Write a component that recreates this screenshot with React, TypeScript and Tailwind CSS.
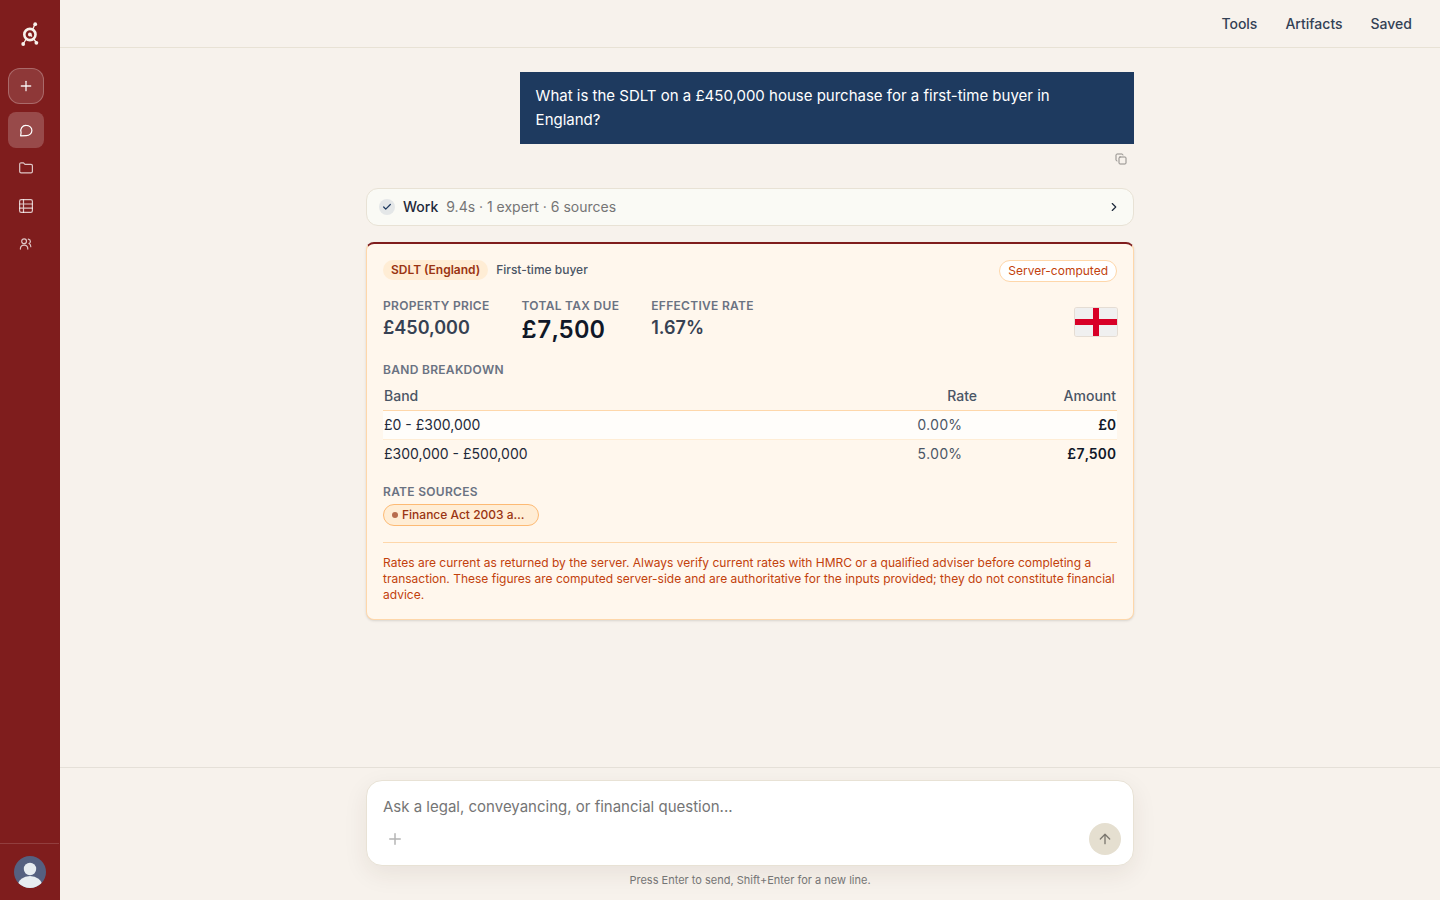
import { useState } from "react";
import { ArrowUp, Check, ChevronRight, Copy, Plus } from "lucide-react";
import clsx from "clsx";

const navItems = [
  { label: "Chat", active: true },
  { label: "Projects", active: false },
  { label: "Tables", active: false },
  { label: "Team", active: false },
];

const bands = [
  { band: "£0 - £300,000", rate: "0.00%", amount: "£0" },
  { band: "£300,000 - £500,000", rate: "5.00%", amount: "£7,500" },
];

function NavIcon({ label }: { label: string }) {
  const common = {
    width: 14,
    height: 14,
    viewBox: "0 0 14 14",
    fill: "none",
    stroke: "currentColor",
    strokeWidth: 1.2,
    strokeLinecap: "round" as const,
    strokeLinejoin: "round" as const,
  };
  if (label === "Chat") {
    return (
      <svg {...common}>
        <path d="M1.6 12.8l.5-3.1A5.3 5.3 0 0 1 7.3 2.4a5.6 5.1 0 0 1 0 10.2z" />
      </svg>
    );
  }
  if (label === "Projects") {
    return (
      <svg {...common}>
        <path d="M.7 3.2c0-.9.5-1.4 1.4-1.4h2.4l1.5 1.5h6c.9 0 1.4.5 1.4 1.4v5.8c0 .9-.5 1.4-1.4 1.4H2.1c-.9 0-1.4-.5-1.4-1.4z" />
      </svg>
    );
  }
  if (label === "Tables") {
    return (
      <svg {...common}>
        <rect x=".6" y=".6" width="12.8" height="12.8" rx="1.6" />
        <path d="M4.5.6v12.8M.6 5h12.8M.6 9.2h12.8" />
      </svg>
    );
  }
  return (
    <svg {...common}>
      <circle cx="5.1" cy="4.2" r="2.4" />
      <path d="M1.4 12.1c0-2.5 1.4-3.9 3.7-3.9s3.7 1.4 3.7 3.9M9.3 2.2c1.3.2 2.1 1 2.1 2.2 0 .9-.5 1.7-1.4 2.1 1.2.6 1.8 1.6 1.8 3.2" />
    </svg>
  );
}

function Logo() {
  return (
    <svg className="h-6 w-6" viewBox="0 0 24 24" fill="none" stroke="#f7f2ec">
      <circle cx="11.9" cy="12.5" r="5.6" strokeWidth="2.6" />
      <circle cx="11.9" cy="12.5" r="1.9" fill="#f7f2ec" stroke="none" />
      <path d="M12 12.5l2 2M14.6 7.8L17 2M8.2 17l-3 5M15.5 17l3 3.5" strokeWidth="1.3" />
      <g fill="#f7f2ec" stroke="none">
        <circle cx="17.2" cy="2.2" r="1.9" />
        <circle cx="5.2" cy="22" r="1.9" />
        <circle cx="18.4" cy="20.8" r="1.9" />
      </g>
    </svg>
  );
}

function Sidebar() {
  return (
    <aside className="flex w-[60px] shrink-0 flex-col bg-[#7f1d1d]">
      <a href="#" aria-label="Home" className="flex h-[68px] items-center justify-center">
        <Logo />
      </a>
      <nav className="flex flex-1 flex-col gap-0.5 px-2">
        <button
          aria-label="New chat"
          className="mb-1.5 flex h-9 w-9 items-center justify-center rounded-xl border border-white/25 bg-white/12 text-white/90"
        >
          <Plus size={16} strokeWidth={2} />
        </button>
        {navItems.map((item) => (
          <button
            key={item.label}
            aria-label={item.label}
            className={clsx(
              "flex h-9 w-9 items-center justify-center rounded-lg",
              item.active ? "bg-white/20 text-white" : "text-white/75",
            )}
          >
            <NavIcon label={item.label} />
          </button>
        ))}
      </nav>
      <div className="mr-px flex justify-center border-t border-white/15 py-3">
        <button aria-label="Account" className="ml-px h-8 w-8 overflow-hidden rounded-full">
          <svg viewBox="0 0 32 32">
            <rect width="32" height="32" fill="#556080" />
            <circle cx="16" cy="13" r="6.2" fill="#e7ecf1" />
            <ellipse cx="16" cy="29" rx="12" ry="9" fill="#e7ecf1" />
          </svg>
        </button>
      </div>
    </aside>
  );
}

function Stat({ label, value, large }: { label: string; value: string; large?: boolean }) {
  return (
    <div>
      <dt className="text-xs font-semibold tracking-wide text-gray-500 uppercase">{label}</dt>
      <dd
        className={clsx(
          "font-semibold",
          large ? "text-2xl text-gray-900 tabular-nums" : "text-lg text-gray-700",
        )}
      >
        {value}
      </dd>
    </div>
  );
}

function TaxCard() {
  return (
    <section className="mt-4 rounded-lg border border-t-2 border-[#fed7aa] border-t-[#7f1d1d] bg-[#fff7ed] p-4 shadow-sm">
      <div className="flex items-start justify-between">
        <div className="flex items-center gap-2 text-xs">
          <span className="rounded-full bg-[#ffedd5] px-2 py-0.5 font-semibold text-[#9a3412]">
            SDLT (England)
          </span>
          <span className="font-medium text-gray-600">First-time buyer</span>
        </div>
        <span className="rounded-full border border-[#fed7aa] bg-white px-2 py-0.5 text-xs text-[#c2410c]">
          Server-computed
        </span>
      </div>

      <div className="mt-4 flex items-center justify-between">
        <dl className="flex gap-8">
          <Stat label="Property price" value="£450,000" />
          <Stat label="Total tax due" value="£7,500" large />
          <Stat label="Effective rate" value="1.67%" />
        </dl>
        <svg
          role="img"
          aria-label="Flag of England"
          className="h-7 w-[42px] rounded-xs ring-1 ring-black/10"
          viewBox="0 0 42 28"
        >
          <rect width="42" height="28" fill="#f0f0f0" />
          <path fill="#d80027" d="M18 0h6v11h18v6H24v11h-6V17H0v-6h18z" />
        </svg>
      </div>

      <h3 className="mt-4 mb-1 text-xs font-semibold tracking-wide text-gray-500 uppercase">
        Band breakdown
      </h3>
      <table className="w-full text-sm">
        <thead>
          <tr className="border-b border-[#fed7aa] text-gray-600">
            <th className="px-px py-1 text-left font-medium">Band</th>
            <th className="px-px py-1 text-right font-medium">Rate</th>
            <th className="w-[139px] px-px py-1 text-right font-medium">Amount</th>
          </tr>
        </thead>
        <tbody>
          {bands.map((row) => (
            <tr
              key={row.band}
              className="border-b border-[#ffedd5] odd:bg-white/70 last:border-b-0"
            >
              <td className="px-px py-1 text-gray-800">{row.band}</td>
              <td className="py-1 pr-4 text-right text-gray-600 tabular-nums">{row.rate}</td>
              <td className="px-px py-1 text-right font-semibold text-gray-900 tabular-nums">
                {row.amount}
              </td>
            </tr>
          ))}
        </tbody>
      </table>

      <h3 className="mt-4 mb-1 text-xs font-semibold tracking-wide text-gray-500 uppercase">
        Rate sources
      </h3>
      <button className="flex w-[156px] items-center gap-1 rounded-full border border-[#fdba74] bg-[#ffedd5] px-2 py-0.5 text-xs font-medium text-[#9a3412]">
        <span className="h-1.5 w-1.5 rounded-full bg-current opacity-70" />
        Finance Act 2003 a…
      </button>

      <p className="mt-4 border-t border-[#fed7aa] pt-3 text-xs text-[#c2410c]">
        Rates are current as returned by the server. Always verify current rates with HMRC or a
        qualified adviser before completing a transaction. These figures are computed server-side
        and are authoritative for the inputs provided; they do not constitute financial advice.
      </p>
    </section>
  );
}

function Composer() {
  const [text, setText] = useState("");

  return (
    <footer className="border-t border-[#e5e0d8] px-4 py-3">
      <div className="mx-auto max-w-3xl">
        <form
          onSubmit={(e) => e.preventDefault()}
          className="rounded-2xl border border-[#e8e2d5] bg-white pt-3 pb-2.5 shadow-[0_8px_24px_rgba(60,40,20,0.08)]"
        >
          <textarea
            aria-label="Question"
            rows={1}
            value={text}
            onChange={(e) => setText(e.target.value)}
            placeholder="Ask a legal, conveyancing, or financial question..."
            className="block h-[30px] w-full resize-none px-4 py-0.5 text-[15px] leading-6 outline-none placeholder:text-[#757575]"
          />
          <div className="flex items-center justify-between px-3">
            <button
              type="button"
              aria-label="Add attachment"
              className="flex h-8 w-8 items-center justify-center text-[#b4b4b4]"
            >
              <Plus size={18} strokeWidth={2} />
            </button>
            <button
              type="submit"
              aria-label="Send"
              className="flex h-8 w-8 items-center justify-center rounded-full bg-[#e5dfd0] text-[#7c7870]"
            >
              <ArrowUp size={16} strokeWidth={2} />
            </button>
          </div>
        </form>
        <p className="mt-1.5 text-center text-[11px] leading-4 text-[#757575]">
          Press Enter to send, Shift+Enter for a new line.
        </p>
      </div>
    </footer>
  );
}

export default function App() {
  return (
    <div className="flex h-screen bg-[#f7f2ec] font-['Inter',sans-serif] text-gray-900">
      <Sidebar />
      <div className="flex min-w-0 flex-1 flex-col">
        <header className="flex h-12 shrink-0 items-center justify-end gap-7 border-b border-[#e8e2d5] px-7 text-sm font-medium text-[#334155]">
          <a href="#tools">Tools</a>
          <a href="#artifacts">Artifacts</a>
          <a href="#saved">Saved</a>
        </header>

        <main className="min-h-0 flex-1 overflow-y-auto px-4 py-6">
          <div className="mx-auto max-w-3xl">
            <div className="flex flex-col items-end">
              <div className="max-w-4/5 bg-[#1e3a5f] px-4 py-3 text-[15px] leading-6 text-white">
                What is the SDLT on a £450,000 house purchase for a first-time buyer in England?
              </div>
              <button aria-label="Copy message" className="mt-0.5 p-[7px] text-[#8f8c88]">
                <Copy size={12} strokeWidth={2} />
              </button>
            </div>

            <button className="mt-4 flex w-full items-center rounded-xl border border-[#e8e2d5] bg-[#fafaf5] px-3 py-2 text-left text-sm leading-5">
              <span className="mr-2 flex h-4 w-4 items-center justify-center rounded-full bg-[#e4e7e8] text-[#1e3a5f]">
                <Check size={10} strokeWidth={3} />
              </span>
              <span className="mr-2 font-medium text-[#1e293b]">Work</span>
              <span className="flex-1 text-[#757575]">9.4s · 1 expert · 6 sources</span>
              <ChevronRight size={14} strokeWidth={2} className="text-[#1e293b]" />
            </button>

            <TaxCard />
          </div>
        </main>

        <Composer />
      </div>
    </div>
  );
}
